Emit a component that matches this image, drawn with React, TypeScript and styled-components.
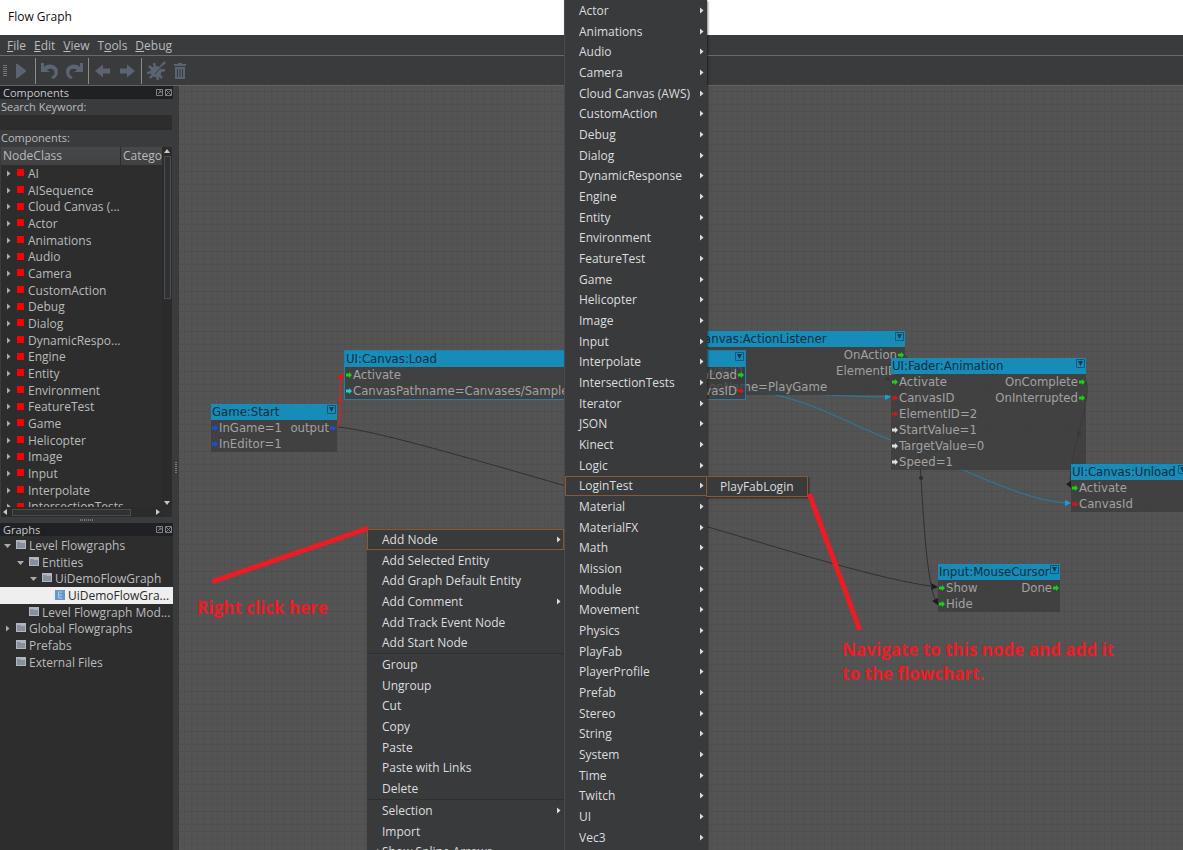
import React from "react";
import styled, { createGlobalStyle, css } from "styled-components";

const ui = `"Open Sans", "Noto Sans", sans-serif`;
const nodeFont = `"DejaVu Sans Condensed", "DejaVu Sans", sans-serif`;

const GlobalStyle = createGlobalStyle`
  * { box-sizing: border-box; }
  body { margin: 0; background: #3a3b3d; font-family: ${ui}; font-size: 12px; color: #b9bbbd; }
  button { font: inherit; color: inherit; background: none; border: 0; padding: 0; margin: 0; text-align: left; }
  ul { list-style: none; margin: 0; padding: 0; }
  svg { display: block; flex: none; }
`;

const Shell = styled.div`
  position: relative;
  display: flex;
  flex-direction: column;
  height: 100vh;
  min-height: 600px;
  overflow: hidden;
`;

const TitleBar = styled.header`
  height: 35px;
  flex: none;
  padding: 0 8px;
  background: #fff;
  color: #111;
  line-height: 34px;
`;

const MenuBar = styled.nav`
  height: 21px;
  flex: none;
  display: flex;
  align-items: center;
  gap: 8px;
  padding: 0 7px;
  background: #3a3b3d;
  border-bottom: 1px solid #6a6a6a;
`;

const ToolBar = styled.div`
  height: 30px;
  flex: none;
  display: flex;
  align-items: center;
  padding-left: 3px;
  background: #3a3b3d;
  border-bottom: 1px solid #626262;
  color: #5b6473;
`;

const Grip = styled.span`
  width: 4px;
  height: 12px;
  margin-right: 2px;
  background: repeating-linear-gradient(#74767a 0 1px, transparent 1px 2px);
`;

const ToolButton = styled.button`
  width: 24px;
  height: 24px;
  display: flex;
  align-items: center;
  justify-content: center;
`;

const ToolDivider = styled.span`
  width: 1px;
  height: 26px;
  margin: 0 2px;
  background: #8b8b8b;
`;

const Workspace = styled.div`
  flex: 1;
  min-height: 0;
  display: grid;
  grid-template-columns: 173px 6px 1fr;
`;

const SideBar = styled.aside`
  min-height: 0;
  display: grid;
  grid-template-rows: 431px 6px 1fr;
`;

const Splitter = styled.div<{ $vertical?: boolean }>`
  display: flex;
  align-items: center;
  justify-content: center;
  &::before {
    content: "";
    ${(p) =>
      p.$vertical
        ? css`width: 2px; height: 12px; background: repeating-linear-gradient(#77787a 0 1px, transparent 1px 2px);`
        : css`width: 13px; height: 2px; background: repeating-linear-gradient(90deg, #77787a 0 1px, transparent 1px 2px);`}
  }
`;

const Dock = styled.section`
  min-height: 0;
  display: flex;
  flex-direction: column;
`;

const DockTitle = styled.h2`
  height: 13px;
  flex: none;
  display: flex;
  align-items: center;
  margin: 0;
  padding: 0 0 0 3px;
  background: #202124;
  font-size: 11px;
  font-weight: 400;
  line-height: 13px;
  color: #c6c7c9;
  span { flex: 1; }
`;

const DockButton = styled.button`
  width: 9px;
  height: 9px;
  display: flex;
  color: #808285;
`;

const FieldLabel = styled.label`
  height: 16px;
  flex: none;
  padding-left: 1px;
  font-size: 11px;
  line-height: 16px;
`;

const SearchInput = styled.input`
  width: 172px;
  height: 15px;
  flex: none;
  border: 0;
  padding: 0 4px;
  background: #2d2d2d;
  color: #c6c7c9;
  font: inherit;
`;

const TreeBox = styled.div`
  flex: 1;
  min-height: 0;
  margin: 1px 1px 0 1px;
  display: grid;
  grid-template-columns: 1fr 10px;
  grid-template-rows: 1fr 10px;
  background: #2d2d2d;
`;

const TreeView = styled.div`
  min-width: 0;
  min-height: 0;
  overflow: hidden;
`;

const TreeHeader = styled.div`
  height: 18px;
  display: grid;
  grid-template-columns: 119px 1fr;
  line-height: 18px;
  background: linear-gradient(#46484b, #3f4143);
  span { padding-left: 2px; overflow: hidden; }
  span + span { border-left: 1px solid #2d2d2d; }
`;

const TreeList = styled.ul`
  display: grid;
  grid-auto-rows: 17px 17px 16px;
`;

const TreeRow = styled.li<{ $depth?: number; $selected?: boolean }>`
  display: flex;
  align-items: center;
  padding-left: ${(p) => 3 + (p.$depth ?? 0) * 13}px;
  white-space: nowrap;
  line-height: 16px;
  color: ${(p) => (p.$selected ? "#2a2a2a" : "inherit")};
  background: ${(p) => (p.$selected ? "#efefef" : "none")};
`;

const TwistySlot = styled.span`
  width: 12px;
  flex: none;
  display: flex;
  color: #a9abad;
`;

const RowIcon = styled.svg`
  width: 10px;
  height: 10px;
  margin: 0 3px 2px 1px;
`;

const RedSquare = styled.span`
  width: 7px;
  height: 7px;
  margin: 0 4px 2px 1px;
  flex: none;
  background: #fa0000;
`;

const ScrollBar = styled.div<{ $horizontal?: boolean }>`
  display: flex;
  flex-direction: ${(p) => (p.$horizontal ? "row" : "column")};
  align-items: center;
  justify-content: space-between;
  background: #2b2b2b;
  color: #c6c7c9;
`;

const ScrollThumb = styled.span<{ $horizontal?: boolean }>`
  border: 1px solid #4b4c4e;
  background: #303132;
  ${(p) =>
    p.$horizontal
      ? css`height: 7px; width: 119px; margin: 0 auto 0 3px;`
      : css`width: 7px; height: 143px; margin: 1px 0 auto;`}
`;

const GraphTree = styled(TreeView)`
  flex: 1;
  padding-top: 1px;
  background: #2d2d2d;
`;

const Canvas = styled.main`
  position: relative;
  overflow: hidden;
  background-color: #545454;
  background-image:
    linear-gradient(90deg, #505050 0 1px, transparent 1px 7px, #505050 7px 8px, transparent 8px 13px, #505050 13px 14px, transparent 14px),
    linear-gradient(#4e4e4e 0 1px, transparent 1px 7px, #505050 7px 8px, transparent 8px 13px, #505050 13px 14px, transparent 14px);
  background-size: 20px 20px;
  background-position: 5px 5px;
`;

const Wires = styled.svg`
  position: absolute;
  inset: 0;
  width: 100%;
  height: 100%;
`;

const NodeBox = styled.article<{ $x: number; $y: number; $w: number; $active?: boolean }>`
  position: absolute;
  left: ${(p) => p.$x}px;
  top: ${(p) => p.$y}px;
  width: ${(p) => p.$w}px;
  background: rgba(60, 60, 60, 0.8);
  outline: ${(p) => (p.$active ? "1px solid #1f7fa6" : "none")};
  color: #a2a2a2;
  font-family: ${nodeFont};
  font-size: 13px;
`;

const NodeTitle = styled.h3`
  display: flex;
  justify-content: space-between;
  margin: 0;
  padding-left: 1px;
  height: 16px;
  background: rgba(20, 146, 195, 0.92);
  color: #082c3a;
  font-size: 13px;
  font-weight: 400;
  line-height: 16px;
  white-space: nowrap;
`;

const NodePorts = styled.div`
  display: flex;
  justify-content: space-between;
`;

const PortColumn = styled.ul`
  white-space: nowrap;
`;

const Port = styled.li<{ $out?: boolean }>`
  display: flex;
  flex-direction: ${(p) => (p.$out ? "row-reverse" : "row")};
  align-items: center;
  gap: 1px;
  padding: 0 1px;
  height: 16px;
  line-height: 16px;
`;

const Menu = styled.div<{ $place: "context" | "nodes" | "login" }>`
  position: absolute;
  display: grid;
  align-content: start;
  grid-auto-rows: 21px 21px 20px;
  background: #393a3c;
  color: #dcdddf;
  overflow: hidden;
  box-shadow: 1px 1px 2px rgba(0, 0, 0, 0.5);
  ${(p) =>
    ({
      context: css`left: 367px; top: 529px; bottom: 0; width: 197px; display: flex; flex-direction: column;`,
      nodes: css`left: 564px; top: 0; bottom: 0; width: 143px; border-left: 1px solid #4c4d4f;`,
      login: css`left: 706px; top: 476px; width: 102px; grid-auto-rows: 21px;`,
    })[p.$place]}
`;

const MenuGroup = styled.div`
  flex: none;
  display: grid;
  grid-auto-rows: 21px 21px 20px;
  & + & { border-top: 1px solid #2e2f31; }
`;

const MenuItem = styled.button<{ $wide?: boolean; $active?: boolean }>`
  position: relative;
  display: flex;
  align-items: center;
  justify-content: space-between;
  padding: 0 1px 0 ${(p) => (p.$wide ? 14 : 13)}px;
  border: 1px solid ${(p) => (p.$active ? "#8a5a2e" : "transparent")};
  line-height: 18px;
  white-space: nowrap;
`;

const CheckMark = styled.svg`
  position: absolute;
  left: 3px;
  top: 5px;
`;

const MarkLines = styled.svg`
  position: absolute;
  inset: 0;
  width: 100%;
  height: 100%;
  pointer-events: none;
`;

const Note = styled.p<{ $x: number; $y: number }>`
  position: absolute;
  left: ${(p) => p.$x}px;
  top: ${(p) => p.$y}px;
  margin: 0;
  color: #ed1c24;
  font: 700 17px/24px "Open Sans", sans-serif;
  white-space: nowrap;
`;

const Twisty = ({ open }: { open?: boolean }) => (
  <svg width="8" height="8" viewBox="0 0 8 8" fill="currentColor">
    <path d={open ? "M1 2h7L4.500 6z" : "M3 .5v6l3.500-3z"} />
  </svg>
);

const Arrow = ({ d }: { d: string }) => (
  <svg width="8" height="8" viewBox="0 0 8 8" fill="currentColor"><path d={d} /></svg>
);

const FolderIcon = () => (
  <RowIcon viewBox="0 0 10 10">
    <path d="M0 0h10v9H0z" fill="#b2b5ba" />
    <path d="M1 2h3l1 1h4v5H1z" fill="#8790a0" />
  </RowIcon>
);

const EntityIcon = () => (
  <RowIcon viewBox="0 0 10 10">
    <path d="M0 0h10v10H0z" fill="#6498c9" />
    <path d="M7 2H3.500v6H7M3.500 5H7" fill="none" stroke="#a8cdec" />
  </RowIcon>
);

const PortIcon = ({ color }: { color: string }) => (
  <svg width="6" height="6" viewBox="0 0 6 6" fill={color}><path d="M0 1.500h3V0l3 3-3 3V4.500H0z" /></svg>
);

const CollapseIcon = () => (
  <svg width="10" height="10" viewBox="0 0 10 10">
    <path d="M.5 1.500h8v8h-8z" fill="none" stroke="#0b5877" />
    <path d="M2 3h5L4.500 8z" fill="#0a3a4e" />
  </svg>
);

const DockIcon = ({ d }: { d: string }) => (
  <svg width="9" height="9" viewBox="0 0 9 9" fill="none" stroke="currentColor">
    <path d="M1.500 1.500h6v6h-6z" /><path d={d} />
  </svg>
);

const Icon = ({ children }: { children: React.ReactNode }) => (
  <svg width="20" height="20" viewBox="0 0 20 20" fill="currentColor">{children}</svg>
);

const components = [
  "AI", "AISequence", "Cloud Canvas (...", "Actor", "Animations", "Audio", "Camera", "CustomAction", "Debug",
  "Dialog", "DynamicRespo...", "Engine", "Entity", "Environment", "FeatureTest", "Game", "Helicopter", "Image",
  "Input", "Interpolate", "IntersectionTests",
];

const graphs: { label: string; depth: number; open?: boolean; closed?: boolean; selected?: boolean }[] = [
  { label: "Level Flowgraphs", depth: 0, open: true },
  { label: "Entities", depth: 1, open: true },
  { label: "UiDemoFlowGraph", depth: 2, open: true },
  { label: "UiDemoFlowGra...", depth: 3, selected: true },
  { label: "Level Flowgraph Mod...", depth: 1 },
  { label: "Global Flowgraphs", depth: 0, closed: true },
  { label: "Prefabs", depth: 0 },
  { label: "External Files", depth: 0 },
];

const nodeCategories = [
  "Actor", "Animations", "Audio", "Camera", "Cloud Canvas (AWS)", "CustomAction", "Debug", "Dialog",
  "DynamicResponse", "Engine", "Entity", "Environment", "FeatureTest", "Game", "Helicopter", "Image", "Input",
  "Interpolate", "IntersectionTests", "Iterator", "JSON", "Kinect", "Logic", "LoginTest", "Material", "MaterialFX",
  "Math", "Mission", "Module", "Movement", "Physics", "PlayFab", "PlayerProfile", "Prefab", "Stereo", "String",
  "System", "Time", "Twitch", "UI", "Vec3",
];

const contextGroups = [
  ["Add Node", "Add Selected Entity", "Add Graph Default Entity", "Add Comment", "Add Track Event Node", "Add Start Node"],
  ["Group", "Ungroup", "Cut", "Copy", "Paste", "Paste with Links", "Delete"],
  ["Selection", "Import", "Show Spline Arrows"],
];
const withSubmenu = ["Add Node", "Add Comment", "Selection"];

const green = "#14d414";
const red = "#d81414";
const blue = "#1450dc";
const white = "#dedede";
const cyan = "#14d4d4";

type PortDef = [string, string];
const nodes: { title: string; x: number; y: number; w: number; active?: boolean; ins: PortDef[]; outs: PortDef[] }[] = [
  {
    title: "UI:Canvas:ActionListener", x: 500, y: 245, w: 226,
    ins: [["Activate", green], ["CanvasID", red], ["ActionName=PlayGame", cyan]],
    outs: [["OnAction", green], ["ElementID", red]],
  },
  {
    title: "UI:Canvas:Load", x: 166, y: 265, w: 400, active: true,
    ins: [["Activate", green], ["CanvasPathname=Canvases/SampleCanvas", cyan]],
    outs: [["OnLoad", green], ["CanvasID", red]],
  },
  { title: "Game:Start", x: 32, y: 318, w: 126, ins: [["InGame=1", blue], ["InEditor=1", blue]], outs: [["output", blue]] },
  {
    title: "UI:Fader:Animation", x: 712, y: 272, w: 195,
    ins: [["Activate", green], ["CanvasID", red], ["ElementID=2", red], ["StartValue=1", white], ["TargetValue=0", white], ["Speed=1", white]],
    outs: [["OnComplete", green], ["OnInterrupted", green]],
  },
  { title: "UI:Canvas:Unload", x: 892, y: 378, w: 117, ins: [["Activate", green], ["CanvasId", red]], outs: [] },
  { title: "Input:MouseCursor", x: 759, y: 478, w: 122, ins: [["Show", green], ["Hide", green]], outs: [["Done", green]] },
];

export default function App() {
  return (
    <Shell>
      <GlobalStyle />
      <TitleBar>Flow Graph</TitleBar>
      <MenuBar>
        <button><u>F</u>ile</button>
        <button><u>E</u>dit</button>
        <button><u>V</u>iew</button>
        <button>T<u>o</u>ols</button>
        <button><u>D</u>ebug</button>
      </MenuBar>
      <ToolBar>
        <Grip />
        <ToolButton aria-label="Play"><Icon><path d="M5 3l1-.5 9 7v1l-9 7-1-.5z" /></Icon></ToolButton>
        <ToolDivider />
        <ToolButton aria-label="Undo"><Icon><path d="M1 2h3v4C9 1 18 4 18 11c0 3-2 6-5 7l-2-2c6-2 4-10-2-8-1 0-2 1-2 1l3 2H1z" /></Icon></ToolButton>
        <ToolButton aria-label="Redo"><Icon><path d="M19 2h-3v4C11 1 2 4 2 11c0 3 2 6 5 7l2-2C3 14 5 6 11 8c1 0 2 1 2 1l-3 2h9z" /></Icon></ToolButton>
        <ToolDivider />
        <ToolButton aria-label="Back"><Icon><path d="M2 10l8-6.500v4h7v5h-7v4z" /></Icon></ToolButton>
        <ToolButton aria-label="Forward"><Icon><path d="M18 10l-8-6.500v4H3v5h7v4z" /></Icon></ToolButton>
        <ToolDivider />
        <ToolButton aria-label="Debug">
          <Icon>
            <path d="M10 5a5.500 5.500 0 1 0 0 11 5.500 5.500 0 0 0 0-11z" />
            <path d="M8 2l4 17M1 12l18-3M3 5l13 12M19 1L4 17" stroke="currentColor" strokeWidth="2.500" />
            <path d="M9 13l8-9" stroke="#3a3b3d" strokeWidth="1" />
          </Icon>
        </ToolButton>
        <ToolButton aria-label="Delete">
          <Icon>
            <path d="M4 3h4V2h4v1h4v2H4zM5 6h10v12H5z" />
            <path d="M7.500 8v8M10 8v8M12.500 8v8" stroke="#3a3b3d" />
          </Icon>
        </ToolButton>
      </ToolBar>
      <Workspace>
        <SideBar>
          <Dock>
            <DockTitle>
              <span>Components</span>
              <DockButton aria-label="Float"><DockIcon d="M3 6l3-3M4 3h2v2" /></DockButton>
              <DockButton aria-label="Close"><DockIcon d="M2 2l5 5M7 2L2 7" /></DockButton>
            </DockTitle>
            <FieldLabel htmlFor="keyword">Search Keyword:</FieldLabel>
            <SearchInput id="keyword" />
            <FieldLabel as="span">Components:</FieldLabel>
            <TreeBox>
              <TreeView>
                <TreeHeader><span>NodeClass</span><span>Catego</span></TreeHeader>
                <TreeList>
                  {components.map((name) => (
                    <TreeRow key={name}>
                      <TwistySlot><Twisty /></TwistySlot>
                      <RedSquare />
                      {name}
                    </TreeRow>
                  ))}
                </TreeList>
              </TreeView>
              <ScrollBar>
                <Arrow d="M1 6h6L4 2z" />
                <ScrollThumb />
                <Arrow d="M1 2h6L4 6z" />
              </ScrollBar>
              <ScrollBar $horizontal>
                <Arrow d="M6 1v6L2 4z" />
                <ScrollThumb $horizontal />
                <Arrow d="M2 1v6l4-3z" />
              </ScrollBar>
            </TreeBox>
          </Dock>
          <Splitter />
          <Dock>
            <DockTitle>
              <span>Graphs</span>
              <DockButton aria-label="Float"><DockIcon d="M3 6l3-3M4 3h2v2" /></DockButton>
              <DockButton aria-label="Close"><DockIcon d="M2 2l5 5M7 2L2 7" /></DockButton>
            </DockTitle>
            <GraphTree>
              <TreeList>
                {graphs.map((g) => (
                  <TreeRow key={g.label} $depth={g.depth} $selected={g.selected}>
                    <TwistySlot>{(g.open || g.closed) && <Twisty open={g.open} />}</TwistySlot>
                    {g.selected ? <EntityIcon /> : <FolderIcon />}
                    {g.label}
                  </TreeRow>
                ))}
              </TreeList>
            </GraphTree>
          </Dock>
        </SideBar>
        <Splitter $vertical />
        <Canvas>
          <Wires>
            <g transform="translate(-179 -86)" fill="none">
              <path d="M338 427C343 418 337 392 342 376" stroke="#d02424" strokeWidth="1.500" />
              <circle cx="340" cy="400" r="2" fill="#d02424" />
              <path d="M337 377l6-4v7z" fill="#f01010" />
              <path d="M338 427C370 430 440 450 507 469L708 527C780 548 880 580 937 587" stroke="#303030" />
              <path d="M931 583l7 4-7 3z" fill="#1c1c1c" />
              <path d="M745 391C790 392 850 397 888 397M745 391C800 393 850 425 891 440C960 466 1020 500 1066 503" stroke="#237fa6" />
              <path d="M885 394l6 3-6 3zM1065 500l6 3-6 3z" fill="#10a0e8" />
              <path d="M1086 381C1092 400 1070 450 1070 484" stroke="#303030" />
              <circle cx="1079" cy="434" r="2" fill="#2c2c2c" />
              <path d="M1066 484l5-3v7z" fill="#1c1c1c" />
              <path d="M905 355C918 370 917 420 921 478C924 530 928 590 937 603" stroke="#303030" />
              <circle cx="921" cy="478" r="2" fill="#2c2c2c" />
              <path d="M932 601l6-3v7z" fill="#1c1c1c" />
              <path d="M884 380l4-4 3 5z" fill="#2c2c2c" />
            </g>
          </Wires>
          {nodes.map((n) => (
            <NodeBox key={n.title} $x={n.x} $y={n.y} $w={n.w} $active={n.active}>
              <NodeTitle>{n.title}<CollapseIcon /></NodeTitle>
              <NodePorts>
                <PortColumn>
                  {n.ins.map(([label, color]) => <Port key={label}><PortIcon color={color} />{label}</Port>)}
                </PortColumn>
                <PortColumn>
                  {n.outs.map(([label, color]) => <Port key={label} $out><PortIcon color={color} />{label}</Port>)}
                </PortColumn>
              </NodePorts>
            </NodeBox>
          ))}
        </Canvas>
      </Workspace>

      <Menu $place="context" role="menu">
        {contextGroups.map((group) => (
          <MenuGroup key={group[0]}>
            {group.map((label) => (
              <MenuItem key={label} role="menuitem" $wide $active={label === "Add Node"}>
                {label === "Show Spline Arrows" && (
                  <CheckMark width="8" height="8" viewBox="0 0 8 8" fill="none" stroke="currentColor"><path d="M1 4l2 3 4-6" /></CheckMark>
                )}
                {label}
                {withSubmenu.includes(label) && <Twisty />}
              </MenuItem>
            ))}
          </MenuGroup>
        ))}
      </Menu>
      <Menu $place="nodes" role="menu">
        {nodeCategories.map((label) => (
          <MenuItem key={label} role="menuitem" $active={label === "LoginTest"}>{label}<Twisty /></MenuItem>
        ))}
      </Menu>
      <Menu $place="login" role="menu">
        <MenuItem role="menuitem" $active>PlayFabLogin</MenuItem>
      </Menu>

      <MarkLines fill="none" stroke="#ed1c24" strokeWidth="5" strokeLinecap="round">
        <path d="M214 581L366 529M810 496L859 628" />
      </MarkLines>
      <Note $x={197} $y={596}>Right click here</Note>
      <Note $x={842} $y={638}>Navigate to this node and add it<br />to the flowchart.</Note>
    </Shell>
  );
}
